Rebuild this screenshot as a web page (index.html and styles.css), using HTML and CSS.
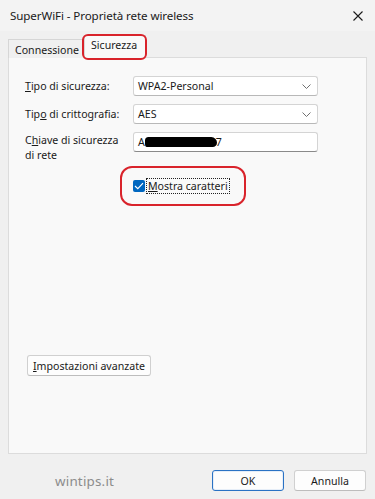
FILE: index.html
```html
<!DOCTYPE html>
<html lang="it">
<head>
    <meta charset="UTF-8">
    <title>SuperWiFi - Proprietà rete wireless</title>
    <link rel="stylesheet" href="styles.css">
</head>
<body>
    <div class="window">
        <!-- Title bar -->
        <div class="titlebar">
            <span class="title">SuperWiFi - Proprietà rete wireless</span>
            <svg class="close" width="10" height="10" viewBox="0 0 10 10">
                <path d="M0.5 0.5 L9.5 9.5 M9.5 0.5 L0.5 9.5" stroke="#1a1a1a" stroke-width="1.1" fill="none"/>
            </svg>
        </div>

        <!-- Tabs -->
        <div class="tabs">
            <div class="tab">Connessione</div>
            <div class="tab active">Sicurezza<span class="mark mark-tab"></span></div>
        </div>

        <!-- Panel -->
        <div class="panel">
            <div class="form">
                <div class="row">
                    <label class="label"><u>T</u>ipo di sicurezza:</label>
                    <div class="select">WPA2-Personal
                        <svg class="chev" width="9" height="5" viewBox="0 0 9 5"><path d="M0.5 0.5 L4.5 4.5 L8.5 0.5" stroke="#707070" fill="none"/></svg>
                    </div>
                </div>
                <div class="row">
                    <label class="label">Tip<u>o</u> di crittografia:</label>
                    <div class="select">AES
                        <svg class="chev" width="9" height="5" viewBox="0 0 9 5"><path d="M0.5 0.5 L4.5 4.5 L8.5 0.5" stroke="#707070" fill="none"/></svg>
                    </div>
                </div>
                <div class="row row-key">
                    <label class="label">C<u>h</u>iave di sicurezza<br>di rete</label>
                    <div class="input">A<span class="blot"></span>7</div>
                </div>
            </div>

            <div class="check-wrap">
                <div class="check">
                    <span class="box">
                        <svg width="10" height="8" viewBox="0 0 10 8"><path d="M1 4 L3.8 6.6 L9 1.2" stroke="#fff" stroke-width="1.2" fill="none"/></svg>
                    </span>
                    <span class="check-text"><u>M</u>ostra caratteri</span>
                </div>
                <span class="mark mark-check"></span>
            </div>

            <button class="btn btn-adv"><u>I</u>mpostazioni avanzate</button>
        </div>

        <!-- Footer -->
        <div class="footer">
            <span class="brand">wintips.it</span>
            <button class="btn btn-ok">OK</button>
            <button class="btn">Annulla</button>
        </div>
    </div>
</body>
</html>
```

FILE: styles.css
```css
/* General */
body {
    margin: 0;
    font-family: "Noto Sans", "Open Sans", sans-serif;
    font-size: 10.6px;
    color: #1a1a1a;
    background: #f0f0f0;
}
u {
    text-decoration-thickness: 1px;
    text-underline-offset: 1px;
}
.window {
    width: 375px;
    height: 499px;
    background: #f0f0f0;
    display: flex;
    flex-direction: column;
    overflow: hidden;
}
/* Title bar */
.titlebar {
    height: 31px;
    background: #f3f3f3;
    display: flex;
    align-items: center;
    justify-content: space-between;
    padding: 0 12px 0 10px;
}
.title {
    font-size: 11.6px;
    letter-spacing: -0.1px;
}
.close {
    margin-top: 1px;
}
/* Tabs */
.tabs {
    display: flex;
    align-items: flex-end;
    height: 27px;
    padding-left: 8px;
}
.tab {
    height: 18px;
    padding: 0 5px 0 6px;
    line-height: 20px;
    border: 1px solid #d6d6d6;
    border-bottom: none;
    background: #f0f0f0;
    position: relative;
}
.tab.active {
    height: 22px;
    line-height: 18px;
    background: #f9f9f9;
    border-color: #d9d9d9;
    margin-left: -1px;
    padding: 0 8px 0 6px;
    z-index: 1;
}
/* Red annotation marks */
.mark {
    position: absolute;
    border: 2px solid #d9232b;
    border-radius: 6px;
    pointer-events: none;
}
.mark-tab {
    left: -3px;
    right: -2px;
    top: -2px;
    bottom: -2px;
}
.mark-check {
    left: 0;
    top: 0;
    width: 122px;
    height: 36px;
    border-radius: 12px;
}
/* Panel */
.panel {
    margin: 0 8px;
    height: 397px;
    background: #f9f9f9;
    border: 1px solid #dcdcdc;
    box-sizing: border-box;
    display: flex;
    flex-direction: column;
    padding: 18px 48px 0 16px;
    margin-top: -1px;
}
.form {
    display: flex;
    flex-direction: column;
    gap: 8px;
}
.row {
    display: flex;
    align-items: center;
}
.row-key {
    align-items: flex-start;
}
.label {
    width: 108px;
    flex: none;
    line-height: 15px;
}
.row-key .label {
    margin-top: 1px;
}
.select, .input {
    flex: 1;
    height: 20px;
    box-sizing: border-box;
    border: 1px solid #d4d4d4;
    border-bottom-color: #b8b8b8;
    border-radius: 3px;
    background: #fff;
    display: flex;
    align-items: center;
    padding: 0 6px 0 4px;
    position: relative;
}
.select {
    justify-content: space-between;
}
.input {
    border-bottom: 1px solid #8a8a8a;
}
.blot {
    display: inline-block;
    width: 72px;
    height: 10px;
    margin: 0 -1px 0 0;
    background: #000;
    border-radius: 5px 8px 6px 4px;
}
/* Checkbox */
.check-wrap {
    position: relative;
    margin: 3px 0 0 95px;
    width: 126px;
    height: 40px;
    display: flex;
    align-items: center;
}
.check {
    display: flex;
    align-items: center;
    margin-left: 13px;
    gap: 2px;
}
.box {
    width: 12px;
    height: 12px;
    border-radius: 2px;
    background: #0067c0;
    display: flex;
    align-items: center;
    justify-content: center;
}
.check-text {
    outline: 1px dotted #222;
    padding: 0 1px;
    line-height: 14px;
}
/* Buttons */
.btn {
    font-family: inherit;
    font-size: 10.6px;
    color: #1a1a1a;
    height: 21px;
    background: #fdfdfd;
    border: 1px solid #d0d0d0;
    border-bottom-color: #bdbdbd;
    border-radius: 3px;
    padding: 0 6px;
    width: 72px;
}
.btn-adv {
    width: auto;
    align-self: flex-start;
    margin-top: 149px;
    margin-left: 2px;
    padding: 0 5px;
}
.footer {
    display: flex;
    align-items: center;
    padding: 16px 9px 0 55px;
    gap: 10px;
}
.brand {
    font-size: 13.4px;
    color: #8c8c8c;
    letter-spacing: 0.2px;
    flex: 1;
}
.btn-ok {
    border: 1px solid #2a72c4;
    box-shadow: inset 0 0 0 1px #e6eef8;
}
```
